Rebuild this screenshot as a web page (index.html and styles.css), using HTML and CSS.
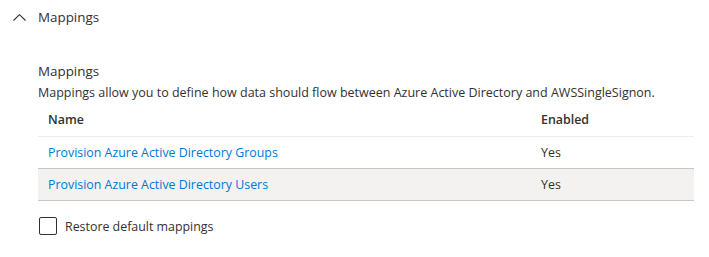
FILE: index.html
```html
<!DOCTYPE html>
<html lang="en">
<head>
  <meta charset="UTF-8">
  <title>Mappings</title>
  <link rel="stylesheet" href="styles.css">
</head>
<body>

  <!-- Collapsible section header -->
  <div class="section-head">
    <svg class="chevron" width="13" height="7" viewBox="0 0 13 7">
      <path d="M0.5 6.5 L6.5 0.7 L12.5 6.5" fill="none" stroke="#323130" stroke-width="1.1"/>
    </svg>
    <span>Mappings</span>
  </div>

  <div class="content">
    <h3 class="sub-title">Mappings</h3>
    <p class="desc">Mappings allow you to define how data should flow between Azure Active Directory and AWSSingleSignon.</p>

    <div class="grid">
      <div class="row head">
        <div class="cell name">Name</div>
        <div class="cell enabled">Enabled</div>
      </div>
      <div class="row">
        <div class="cell name"><a href="#">Provision Azure Active Directory Groups</a></div>
        <div class="cell enabled">Yes</div>
      </div>
      <div class="row selected">
        <div class="cell name"><a href="#">Provision Azure Active Directory Users</a></div>
        <div class="cell enabled">Yes</div>
      </div>
    </div>

    <label class="check">
      <span class="box"></span>
      <span>Restore default mappings</span>
    </label>
  </div>

</body>
</html>
```

FILE: styles.css
```css
body {
  margin: 0;
  background: #ffffff;
  color: #323130;
  font-family: 'Segoe UI', 'Open Sans', sans-serif;
  font-size: 12.4px;
}

.section-head {
  display: flex;
  align-items: center;
  gap: 12px;
  height: 34px;
  padding-left: 13px;
  font-size: 13.4px;
}

.chevron {
  display: block;
}

.content {
  padding: 27px 15px 0 38px;
}

.sub-title {
  margin: 0;
  font-size: 13.4px;
  font-weight: 400;
  line-height: 20px;
}

.desc {
  margin: 2px 0 0;
  font-size: 12.5px;
  line-height: 20px;
}

.row {
  display: flex;
  align-items: center;
  height: 31px;
  border-bottom: 1px solid #c8c6c4;
}

.row.head {
  height: 33px;
  font-weight: 600;
  border-bottom-color: #edebe9;
}

.row.selected {
  background: #f3f2f1;
}

.cell {
  padding-left: 10px;
}

.cell.name {
  width: 483px;
}

.cell a {
  color: #0078d4;
  text-decoration: none;
}

.check {
  display: flex;
  align-items: center;
  gap: 8px;
  margin-top: 16px;
  margin-left: 1px;
}

.box {
  width: 16px;
  height: 16px;
  border: 1px solid #323130;
  border-radius: 2px;
}
```
